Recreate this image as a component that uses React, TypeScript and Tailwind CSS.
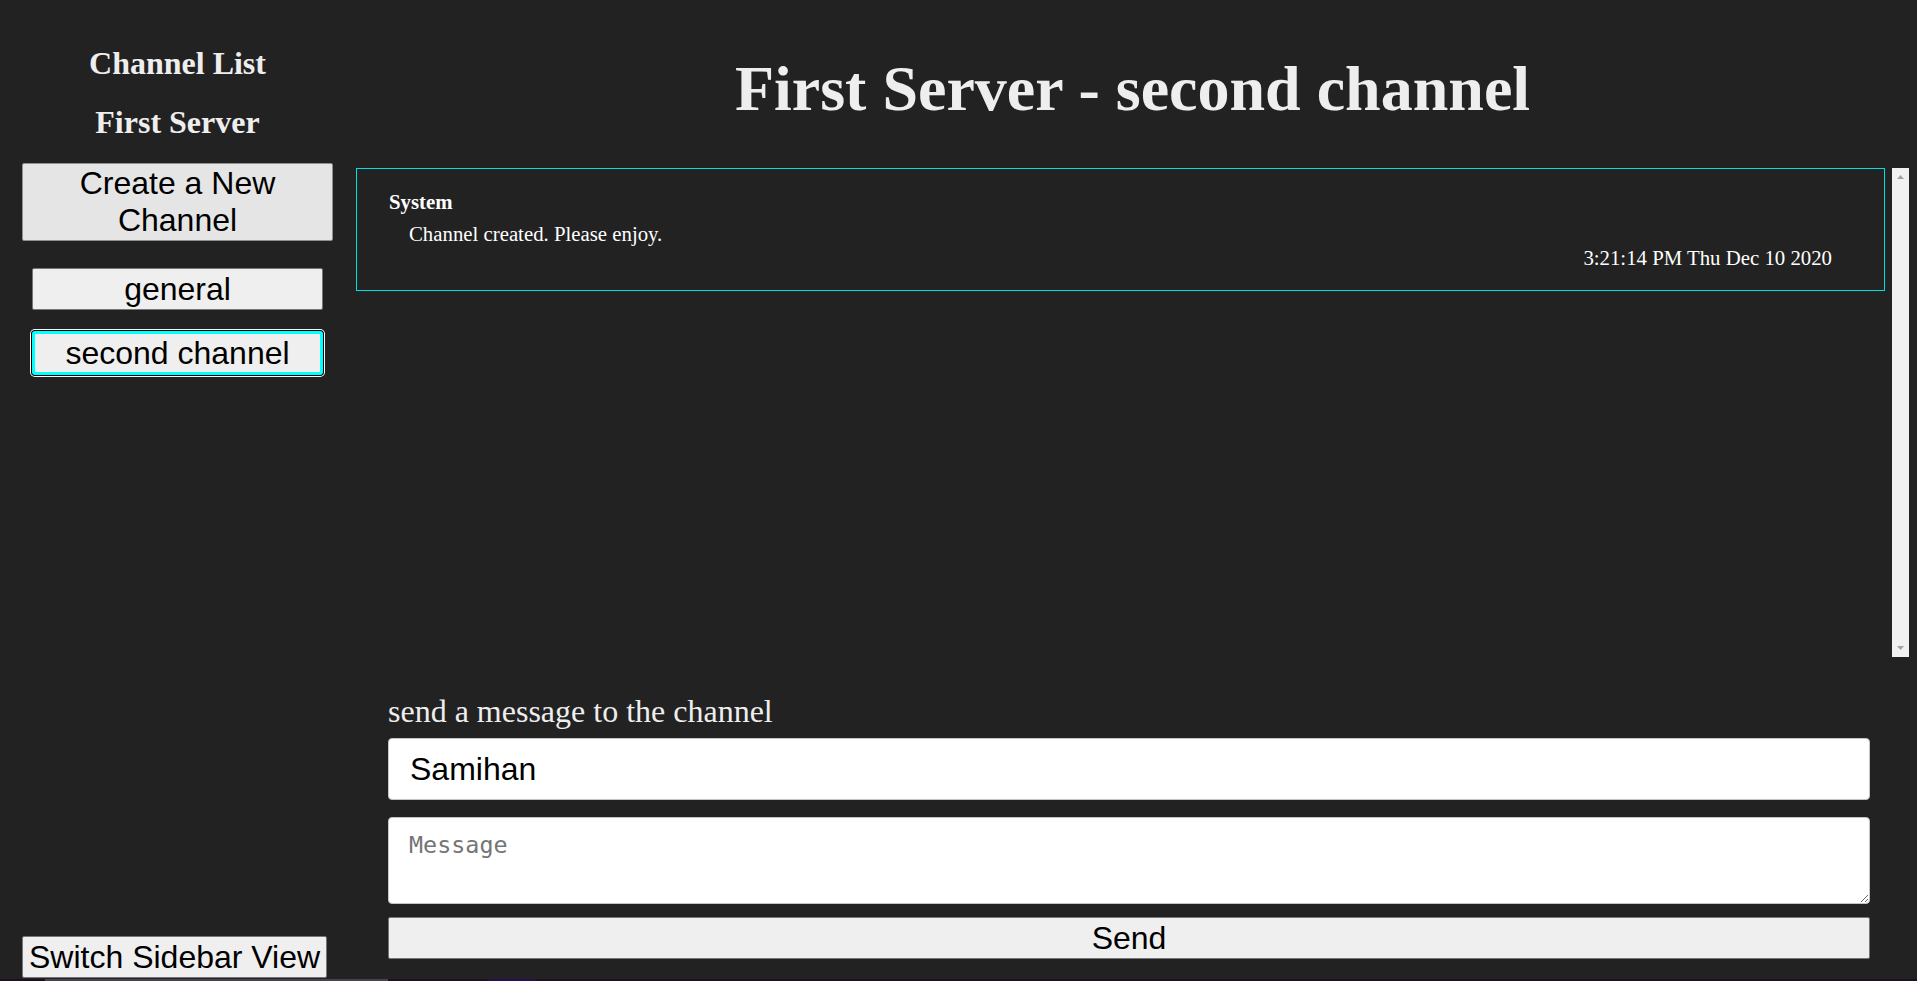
import React from "react";

const serif = "font-['Liberation_Serif','Times_New_Roman',serif]";
const sans = "font-['Liberation_Sans',Arial,sans-serif]";

const channels = [
  { name: "general", active: false },
  { name: "second channel", active: true },
];

const Scrollbar = () => (
  <div className="w-[17px] h-full shrink-0 bg-[#f1f1f1] flex flex-col items-center justify-between pt-[7px] pb-[7px]">
    <svg width="7" height="4" viewBox="0 0 7 4">
      <path d="M3.5 0L7 4H0Z" fill="#a3a3a3" />
    </svg>
    <svg width="7" height="4" viewBox="0 0 7 4">
      <path d="M0 0H7L3.5 4Z" fill="#a3a3a3" />
    </svg>
  </div>
);

const Sidebar = () => (
  <aside className="w-[355px] shrink-0 flex flex-col px-[22px] pb-[1px]">
    <h2 className={`${serif} mt-[45px] text-center text-[32px] leading-[37px] font-bold text-[#eeeeee]`}>
      Channel List
    </h2>
    <h2 className={`${serif} mt-[22px] text-center text-[32px] leading-[37px] font-bold text-[#eeeeee]`}>
      First Server
    </h2>
    <button
      className={`${sans} mt-[22px] w-full h-[78px] px-[6px] bg-[#e5e5e5] border border-[#8f8f8f] rounded-[2px] text-[32px] leading-[36.8px] text-black`}
    >
      Create a New Channel
    </button>

    {/* channel buttons */}
    <div className="mx-[10px] mt-[27px] flex flex-col gap-[21px]">
      {channels.map((c) =>
        c.active ? (
          <button
            key={c.name}
            className={`${sans} h-[44px] w-full bg-[#efefef] border-[3px] border-[#00ffff] rounded-[3px] shadow-[0_0_0_1px_#000,0_0_0_2px_#fff] text-[32px] leading-[36.8px] text-black`}
          >
            {c.name}
          </button>
        ) : (
          <button
            key={c.name}
            className={`${sans} h-[42px] w-full bg-[#efefef] border border-[#767676] rounded-[2px] text-[32px] leading-[36.8px] text-black`}
          >
            {c.name}
          </button>
        )
      )}
    </div>

    <button
      className={`${sans} mt-auto self-start h-[42px] px-[6px] bg-[#efefef] border border-[#767676] rounded-[2px] text-[32px] leading-[36.8px] text-black whitespace-nowrap`}
    >
      Switch Sidebar View
    </button>
  </aside>
);

const ChatView = () => (
  <main className="flex-1 min-w-0 flex flex-col pl-[1px] pr-[8px]">
    <h1 className={`${serif} mt-[52px] text-center text-[64px] leading-[74px] font-bold text-[#eeeeee]`}>
      First Server - second channel
    </h1>

    {/* message list */}
    <div className="mt-[42px] h-[489px] flex">
      <div
        className={`${serif} flex-1 self-start border border-[#00e0e0] pl-[32px] pt-[21px] pb-[20px] text-white text-[20.8px] leading-[24px]`}
      >
        <div className="font-bold">System</div>
        <div className="mt-[8px] pl-[20px]">Channel created. Please enjoy.</div>
        <div className="text-right pr-[52px]">3:21:14 PM Thu Dec 10 2020</div>
      </div>
      <div className="w-[7px] shrink-0" />
      <Scrollbar />
    </div>

    {/* send form */}
    <form className="mt-[36px] pl-[32px] pr-[39px] flex flex-col" onSubmit={(e) => e.preventDefault()}>
      <label className={`${serif} text-[32px] leading-[37px] text-[#eeeeee]`}>
        send a message to the channel
      </label>
      <input
        type="text"
        defaultValue="Samihan"
        className={`${sans} mt-[8px] h-[62px] w-full bg-white border border-[#c4c4c4] rounded-[4px] pl-[21px] text-[32px] text-black outline-none`}
      />
      <textarea
        placeholder="Message"
        className="mt-[17px] h-[87px] w-full bg-white border border-[#c4c4c4] rounded-[4px] pt-[14px] px-[20px] font-['DejaVu_Sans_Mono',monospace] text-[23.4px] leading-[27px] text-black placeholder:text-[#757575] outline-none"
      />
      <button
        type="submit"
        className={`${sans} mt-[13px] h-[42px] w-full bg-[#efefef] border border-[#767676] rounded-[2px] text-[32px] leading-[36.8px] text-black`}
      >
        Send
      </button>
    </form>
  </main>
);

export default function App() {
  return (
    <div className="h-screen w-full bg-[#222222] flex flex-col overflow-hidden">
      <div className="flex flex-1 min-h-0">
        <Sidebar />
        <ChatView />
      </div>
      {/* taskbar edge peeking at the bottom */}
      <div className="h-[2px] w-full bg-[#1c1022] flex">
        <div className="ml-[45px] w-[343px] bg-[#4b3f57]" />
        <div className="ml-[100px] w-[48px] bg-[#2c0b57]" />
      </div>
    </div>
  );
}
